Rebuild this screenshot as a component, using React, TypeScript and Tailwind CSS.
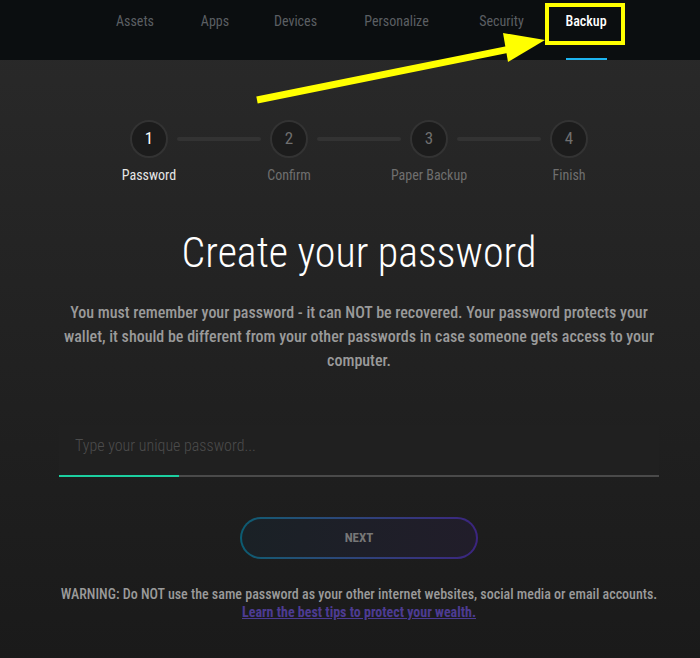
import React from 'react'

const font = "font-['Roboto_Condensed','Liberation_Sans_Narrow','DejaVu_Sans_Condensed',Roboto,sans-serif]"

const navItems = [
  { label: 'Assets', w: 'w-[80px]' },
  { label: 'Apps', w: 'w-[80px]' },
  { label: 'Devices', w: 'w-[81px]' },
  { label: 'Personalize', w: 'w-[121px]' },
  { label: 'Security', w: 'w-[89px]' },
]

const steps = ['Password', 'Confirm', 'Paper Backup', 'Finish']

const App = () => {
  return (
    <div className={`relative min-h-[658px] w-[700px] bg-gradient-to-b from-[#2a2a2a] to-[#1a1a1a] ${font}`}>
      {/* top nav */}
      <nav className="h-[60px] bg-[#0b0e10] flex pl-[95px] pt-[11px]">
        {navItems.map((item) => (
          <div key={item.label} className={`${item.w} text-center text-[14px] leading-5 text-[#5b5f63]`}>
            {item.label}
          </div>
        ))}
        <div className="w-[80px] flex flex-col items-center">
          <div className="text-[14px] leading-5 text-white font-medium">Backup</div>
          <div className="mt-[27px] h-[2px] w-[41px] bg-[#1db4f0]" />
        </div>
      </nav>

      <main className="w-[600px] ml-[59px] flex flex-col items-center">
        {/* stepper */}
        <div className="mt-[60px] flex items-center">
          {steps.map((s, i) => (
            <React.Fragment key={s}>
              <div
                className={`w-[38px] h-[38px] rounded-full bg-[#1c1c1c] border-2 border-[#333333] flex items-center justify-center text-[17px] ${
                  i === 0 ? 'text-white' : 'text-[#6f6f6f]'
                }`}
              >
                {i + 1}
              </div>
              {i < steps.length - 1 && <div className="mx-[9px] w-[84px] h-[4px] rounded-full bg-[#333333]" />}
            </React.Fragment>
          ))}
        </div>
        <div className="mt-[7px] flex">
          {steps.map((s, i) => (
            <div key={s} className={`w-[140px] text-center text-[14px] leading-5 ${i === 0 ? 'text-[#e6e6e6]' : 'text-[#6f6f6f]'}`}>
              {s}
            </div>
          ))}
        </div>

        <h1 className="mt-[44px] text-[42px] leading-[48px] font-light text-white">Create your password</h1>

        <p className="mt-[24px] w-[600px] text-center text-[16px] leading-6 font-medium text-[#9a9a9a] whitespace-nowrap">
          You must remember your password - it can NOT be recovered. Your password protects your
          <br />
          wallet, it should be different from your other passwords in case someone gets access to your
          <br />
          computer.
        </p>

        {/* password input */}
        <div className="mt-[52px] w-[600px]">
          <input
            type="password"
            placeholder="Type your unique password..."
            className="w-full h-[50px] bg-[#202020] px-4 pb-[10px] text-[16px] font-light text-[#cccccc] placeholder:text-[#4c4c4c] outline-none"
          />
          <div className="flex h-[2px] bg-[#4a4a4a]">
            <div className="w-[120px] bg-[#1ccfa0]" />
          </div>
        </div>

        <button className="mt-[40px] w-[238px] h-[42px] rounded-full p-[2px] bg-gradient-to-r from-[#0a5c72] to-[#3b2480]">
          <div className="w-full h-full rounded-full bg-gradient-to-r from-[#1a2126] to-[#211d2a] flex items-center justify-center text-[13px] font-bold text-[#777777]">
            NEXT
          </div>
        </button>

        <p className="mt-[26px] text-center text-[14px] leading-[18px] font-medium text-[#9a9a9a] whitespace-nowrap">
          WARNING: Do NOT use the same password as your other internet websites, social media or email accounts.
          <br />
          <a href="#" className="font-bold text-[#4d3b93] underline">
            Learn the best tips to protect your wealth.
          </a>
        </p>
      </main>

      {/* annotation overlay */}
      <div className="absolute left-[545px] top-[3px] w-[80px] h-[42px] border-4 border-[#ffff00]" />
      <svg className="absolute left-0 top-0 pointer-events-none" width="700" height="120">
        <line x1="257" y1="100" x2="515" y2="48" stroke="#ffff00" strokeWidth="7" />
        <polygon points="545,40 503,33 508,62" fill="#ffff00" />
      </svg>
    </div>
  )
}

export default App
